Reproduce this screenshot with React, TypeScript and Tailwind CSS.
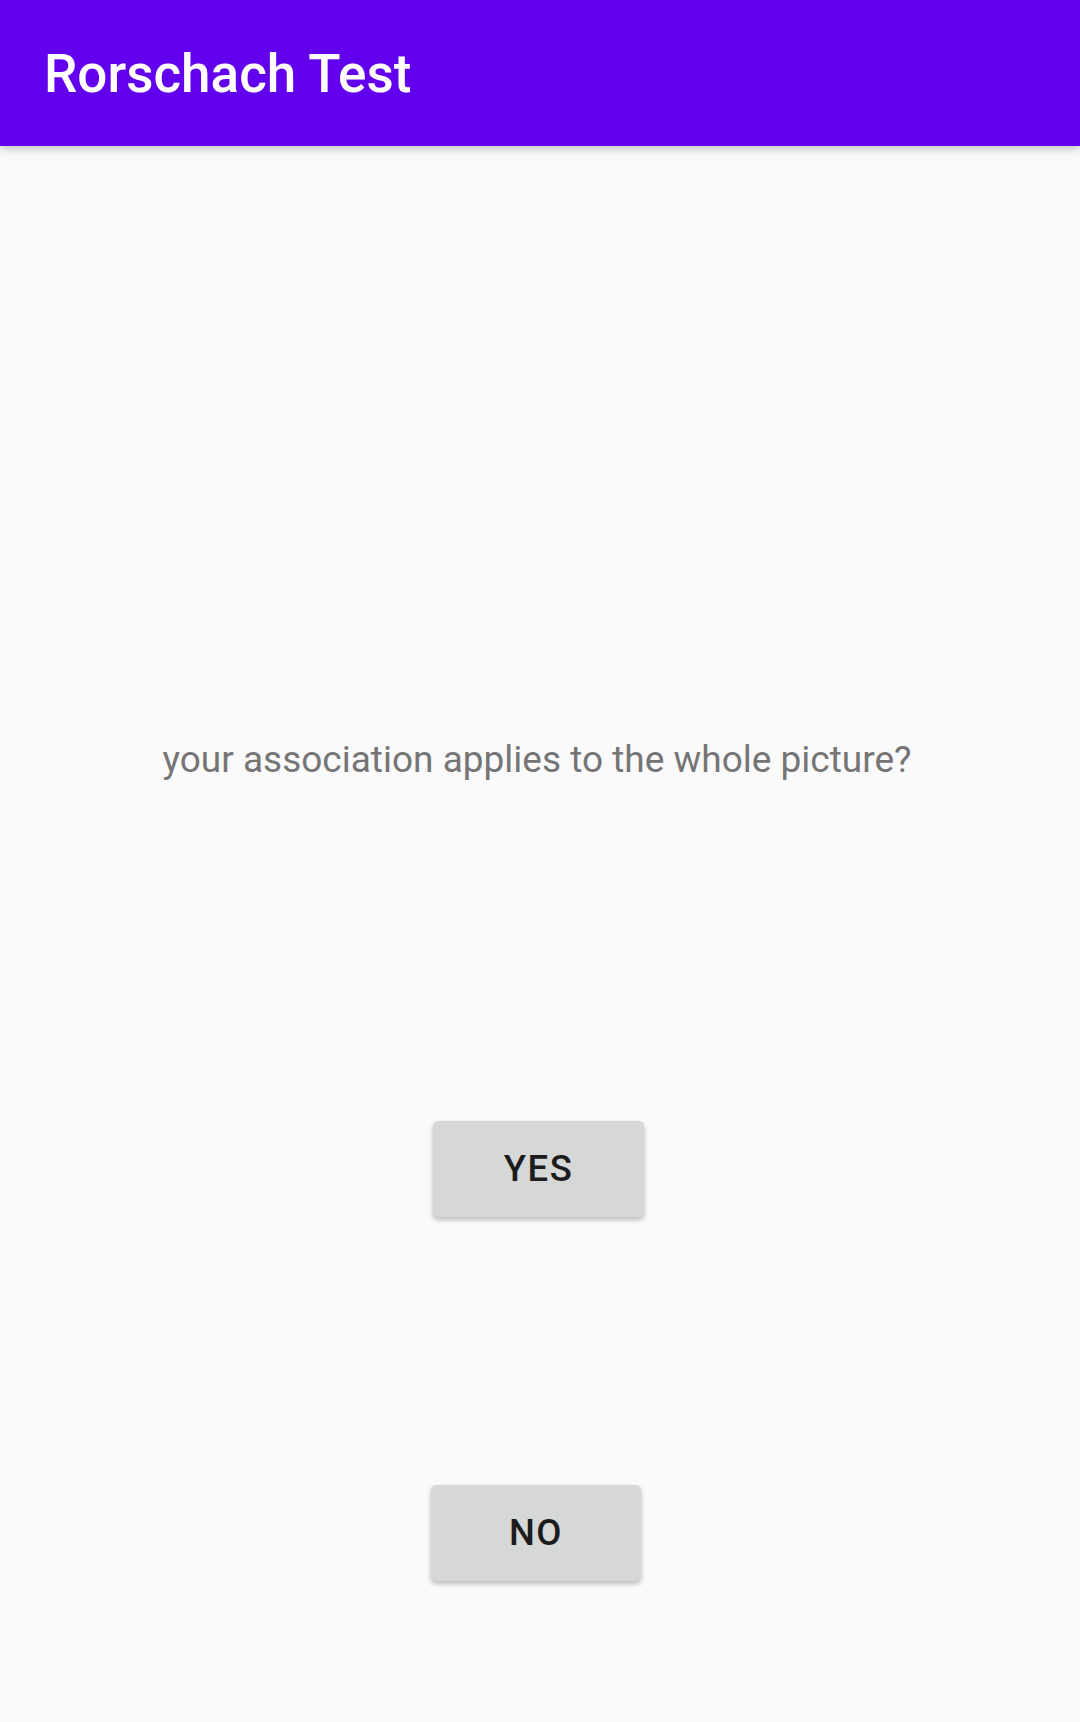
export default function App() {
  return (
    <div className="flex min-h-[1722px] w-[1080px] flex-col bg-[#fafafa] font-['Roboto',sans-serif]">
      <header className="relative z-10 flex h-[146px] items-center bg-[#6200ee] pl-[44px] pt-[3px] shadow-[0_4px_8px_rgba(0,0,0,0.18)]">
        <h1 className="text-[53px] font-medium leading-none text-white">Rorschach Test</h1>
      </header>

      <main className="flex flex-col">
        <p className="mt-[592px] pr-[6px] text-center text-[37px] leading-[44px] text-[#757575]">
          your association applies to the whole picture?
        </p>

        <button className="ml-[433px] mt-[339px] flex h-[96px] w-[211px] items-center justify-center rounded-[5px] bg-[#d6d7d7] text-[36.5px] font-medium tracking-[0.04em] text-[#1c1c1c] shadow-[0_3px_5px_rgba(0,0,0,0.25)]">
          YES
        </button>

        <button className="ml-[431px] mt-[268px] flex h-[96px] w-[210px] items-center justify-center rounded-[5px] bg-[#d6d7d7] text-[36.5px] font-medium tracking-[0.04em] text-[#1c1c1c] shadow-[0_3px_5px_rgba(0,0,0,0.25)]">
          NO
        </button>
      </main>
    </div>
  );
}
